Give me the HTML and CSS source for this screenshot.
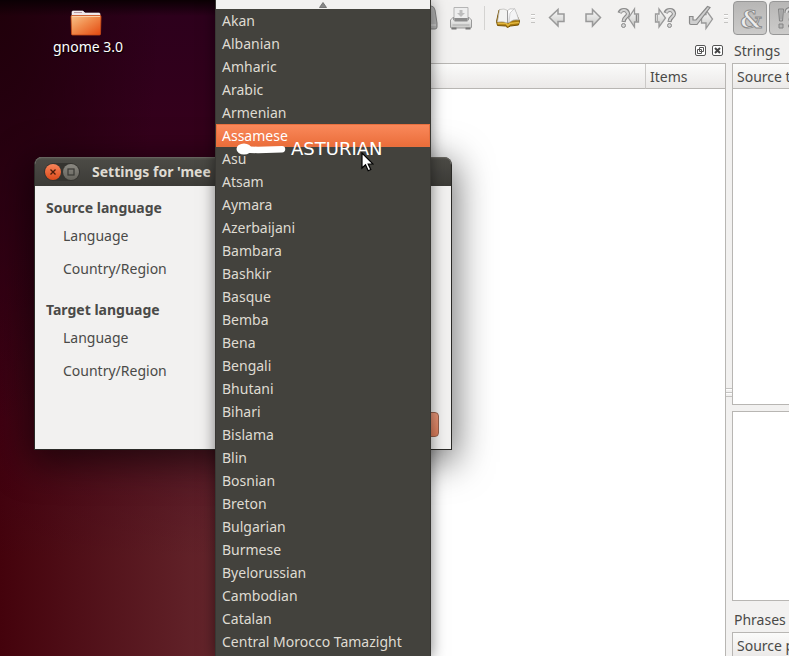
FILE: index.html
```html
<!DOCTYPE html>
<html lang="en">
<head>
<meta charset="utf-8">
<title>Settings</title>
<link rel="stylesheet" href="styles.css">
</head>
<body>
<svg class="defs" aria-hidden="true">
  <defs>
    <linearGradient id="metal" x1="0" y1="0" x2="0" y2="1"><stop offset="0" stop-color="#fafafa"/><stop offset="1" stop-color="#c9c9c7"/></linearGradient>
    <linearGradient id="folder" x1="0" y1="0" x2="1" y2="1"><stop offset="0" stop-color="#f9c48c"/><stop offset=".45" stop-color="#f08b4c"/><stop offset="1" stop-color="#e4480f"/></linearGradient>
  </defs>
</svg>
<main class="desktop">
  <a class="shortcut" href="#folder">
    <svg width="32" height="26" viewBox="0 0 32 26" aria-hidden="true">
      <path d="M2 7V2q0-1 1-1h10l2 2h14q1 0 1 1v4z" fill="#efe6e8" stroke="#fff" stroke-width=".6"/>
      <path d="M4 2.500h8" stroke="#b99ba4" stroke-width="1"/>
      <path d="M1 6.500q0-1 1-1h28q1 0 1 1l-.5 17.500q0 1-1 1h-27q-1 0-1-1z" fill="url(#folder)" stroke="#c84a16" stroke-width=".8"/>
      <path d="M2 6.500h28" stroke="#fbd0a8" stroke-width="1"/>
    </svg>
    <span>gnome 3.0</span>
  </a>

  <section class="app" aria-label="Translation editor">
    <div class="toolbar" role="toolbar" aria-label="Main">
      <button class="tool" aria-label="Save"><svg width="26" height="26" viewBox="0 0 26 26"><path d="M3 18L7 1h12q3 0 4 4l2 13v4q0 2-2 2H5q-2 0-2-2z" fill="#b4b4b4" stroke="#858585"/><path d="M4 20h20" stroke="#ddd"/></svg></button>
      <button class="tool" aria-label="Print"><svg width="26" height="26" viewBox="0 0 26 26"><path d="M6 2.500h14v11H6z" fill="#eee" stroke="#b5b5b5"/><path d="M11.500 5h3v3H17l-4 4-4-4h2.500z" fill="#bdbdbd"/><path d="M5.500 12l-3 3v7q0 1 1 1h19q1 0 1-1v-7l-3-3v3h-15z" fill="url(#metal)" stroke="#999"/><path d="M6.500 13h13v3.500h-13z" fill="#8b8b8b"/><path d="M4.500 20h17" stroke="#aaa"/><path d="M3.500 23.500h5M17.500 23.500h5" stroke="#777" stroke-width="2"/></svg></button>
      <span class="separator"></span>
      <button class="tool" aria-label="Phrase book"><svg width="26" height="26" viewBox="0 0 26 26"><path d="M4 5L1.500 16.500l1 4 8 .5 2 1.500 3-1.500 8-1 1-4-5-10z" fill="#a8790c" stroke="#765204"/><path d="M2.500 18.500h8.500l2 2 2-2 9-1" fill="none" stroke="#e3b83e" stroke-width="1.500"/><path d="M4.500 4.500q5-1.500 8 1v12.500q-4-2-10-1z" fill="#f3f3f1" stroke="#bbb" stroke-width=".7"/><path d="M12.500 5.500Q14 3 19.500 4L24 15q-7-1-11 3z" fill="#fff" stroke="#aaa" stroke-width=".7"/><path d="M12.500 6v12" stroke="#999"/><path d="M15 8l4.500-4.500q2.500 5 4 11-5-1-9.500 3z" fill="#f4f4f5" stroke="#aaa" stroke-width=".5"/></svg></button>
      <span class="handle"></span>
      <button class="tool" aria-label="Previous"><svg width="26" height="26" viewBox="0 0 26 26"><path d="M5.500 12.500L14 4.500V9h6v7.500h-6V21z" fill="url(#metal)" stroke="#999" stroke-width="1.500"/></svg></button>
      <button class="tool" aria-label="Next"><svg width="26" height="26" viewBox="0 0 26 26"><path d="M20.500 12.500L12.500 4.500V9H6v7.500h6.500V21z" fill="url(#metal)" stroke="#999" stroke-width="1.500"/></svg></button>
      <button class="tool" aria-label="Previous unfinished"><svg width="26" height="26" viewBox="0 0 26 26"><path d="M12.500 13l6-9v5h4v8h-4v5z" fill="url(#metal)" stroke="#999" stroke-width="1.300"/><path d="M20.500 9.500v7" stroke="#888" stroke-width="1.500"/><path d="M3.500 8q1-3 4.500-3t4 3.500q0 2-2 3.500t-2.500 5" fill="none" stroke="#8a8a8a" stroke-width="4.200"/><path d="M4.200 7.500Q5.500 5 8 5t4 3.500q0 2-2 3.500t-2.500 4" fill="none" stroke="#d4d4d4" stroke-width="2"/><circle cx="7.500" cy="20.500" r="2" fill="#d4d4d4" stroke="#8a8a8a"/></svg></button>
      <button class="tool" aria-label="Next unfinished"><svg width="26" height="26" viewBox="0 0 26 26"><path d="M3.500 9H7V4l6.500 9L7 22v-5H3.500z" fill="url(#metal)" stroke="#999" stroke-width="1.300"/><path d="M5.500 9.500v7" stroke="#aaa"/><path d="M13.500 8q1-3 4.500-3t4 3.500q0 2-2 3.500t-2.500 5" fill="none" stroke="#8a8a8a" stroke-width="4.200"/><path d="M14.200 7.500Q15.500 5 18 5t4 3.500q0 2-2 3.500t-2.500 4" fill="none" stroke="#d4d4d4" stroke-width="2"/><circle cx="17.500" cy="20.500" r="2" fill="#d4d4d4" stroke="#8a8a8a"/></svg></button>
      <button class="tool" aria-label="Done and next"><svg width="26" height="26" viewBox="0 0 26 26"><path d="M13.500 9.500H18V5l6.500 9L18 23.500V18h-4.500z" fill="url(#metal)" stroke="#999" stroke-width="1.300"/><path d="M1.500 11.500H5v3.500h3L19.500 1.500l2.500 1L9 19.500H3q-1.500 0-1.500-1.500z" fill="#cfcfcf" stroke="#8a8a8a" stroke-width="1.200"/></svg></button>
      <span class="handle"></span>
      <button class="toggle" aria-pressed="true" aria-label="Accelerators"><svg width="30" height="30" viewBox="0 0 30 30"><text class="glyph" x="16" y="25" text-anchor="middle">&amp;</text></svg></button>
      <button class="toggle" aria-pressed="true" aria-label="Ending punctuation"><svg width="30" height="30" viewBox="0 0 30 30"><path d="M7.500 6h5l-1 12h-3zM8 21h4v4H8z" fill="#b5b5b5" stroke="#828282"/><path d="M10 7v9" stroke="#999"/><path d="M15.500 10q0-4 4-4t4 3.500q0 2-2 3.500t-2 4.500" fill="none" stroke="#828282" stroke-width="4"/><path d="M15.500 10q0-4 4-4t4 3.500q0 2-2 3.500t-2 3.500" fill="none" stroke="#ddd" stroke-width="2"/><circle cx="19.500" cy="23" r="2" fill="#ddd" stroke="#828282"/></svg></button>
    </div>
    <div class="docks">
      <section class="dock context">
        <header class="dock-head buttons">
          <button class="mini" aria-label="Float"><svg width="11" height="11" viewBox="0 0 11 11"><rect x=".5" y=".5" width="10" height="10" rx="1.500" fill="#fff" stroke="#555"/><path d="M4.500 2.500h4v4h-4zM2.500 4.500h4v4h-4z" fill="#fff" stroke="#555"/></svg></button>
          <button class="mini" aria-label="Close"><svg width="11" height="11" viewBox="0 0 11 11"><rect x=".5" y=".5" width="10" height="10" rx="1.500" fill="#fff" stroke="#555"/><path d="M3 3l5 5M8 3L3 8" stroke="#444" stroke-width="2"/></svg></button>
        </header>
        <div class="view">
          <table><thead><tr><th aria-label="Context"></th><th class="items">Items</th></tr></thead></table>
        </div>
      </section>
      <div class="splitter"><span></span></div>
      <section class="dock strings">
        <header class="dock-head">Strings</header>
        <div class="view source"><table><thead><tr><th>Source text</th></tr></thead></table></div>
        <div class="view editor"></div>
        <header class="dock-head phrases">Phrases</header>
        <div class="view guesses"><table><thead><tr><th>Source phrase</th></tr></thead></table></div>
      </section>
    </div>
  </section>

  <section class="dialog" role="dialog" aria-labelledby="title">
    <header class="titlebar">
      <div class="controls">
        <button class="round close" aria-label="Close"><svg width="16" height="16" viewBox="0 0 16 16"><path d="M5.500 5.500l5 5M10.500 5.500l-5 5" stroke="#4a1c0a" stroke-width="1.300"/></svg></button>
        <button class="round max" aria-label="Maximize"><svg width="16" height="16" viewBox="0 0 16 16"><rect x="5" y="5" width="6" height="6" fill="none" stroke="#3a3935" stroke-width="1.200"/></svg></button>
      </div>
      <h1 id="title">Settings for 'mee</h1>
    </header>
    <form class="form">
      <fieldset>
        <legend>Source language</legend>
        <div class="field"><label for="sl">Language</label><select id="sl"></select></div>
        <div class="field"><label for="sc">Country/Region</label><select id="sc"></select></div>
      </fieldset>
      <fieldset>
        <legend>Target language</legend>
        <div class="field"><label for="tl">Language</label><select id="tl"></select></div>
        <div class="field"><label for="tc">Country/Region</label><select id="tc"></select></div>
      </fieldset>
      <button type="button" class="ok" aria-label="OK"></button>
    </form>
  </section>

  <div class="menu" role="listbox" aria-label="Language">
    <button class="scroll" aria-label="Scroll up"><svg width="8" height="6" viewBox="0 0 8 6"><path d="M4 .5L7.500 5.500h-7z" fill="#888" stroke="#666" stroke-width=".8"/></svg></button>
    <button role="option">Akan</button>
    <button role="option">Albanian</button>
    <button role="option">Amharic</button>
    <button role="option">Arabic</button>
    <button role="option">Armenian</button>
    <button role="option" aria-selected="true">Assamese</button>
    <button role="option">Asu</button>
    <button role="option">Atsam</button>
    <button role="option">Aymara</button>
    <button role="option">Azerbaijani</button>
    <button role="option">Bambara</button>
    <button role="option">Bashkir</button>
    <button role="option">Basque</button>
    <button role="option">Bemba</button>
    <button role="option">Bena</button>
    <button role="option">Bengali</button>
    <button role="option">Bhutani</button>
    <button role="option">Bihari</button>
    <button role="option">Bislama</button>
    <button role="option">Blin</button>
    <button role="option">Bosnian</button>
    <button role="option">Breton</button>
    <button role="option">Bulgarian</button>
    <button role="option">Burmese</button>
    <button role="option">Byelorussian</button>
    <button role="option">Cambodian</button>
    <button role="option">Catalan</button>
    <button role="option">Central Morocco Tamazight</button>
  </div>

  <div class="note">
    <svg width="50" height="12" viewBox="0 0 50 12" aria-hidden="true"><ellipse cx="8" cy="6" rx="7.500" ry="5.500" fill="#fff"/><path d="M8 6.500l14 .5 24-.8" fill="none" stroke="#fff" stroke-width="6.500" stroke-linecap="round"/></svg>
    <span>ASTURIAN</span>
  </div>
  <svg class="pointer" width="13" height="20" viewBox="0 0 13 20" aria-hidden="true"><path d="M1 1v15l3.500-3.300 2.700 6 2.600-1.200-2.600-5.500H12z" fill="#fff" stroke="#000" stroke-width="1.200"/></svg>
</main>
</body>
</html>
```
FILE: styles.css
```css
* { box-sizing: border-box; }
body {
  margin: 0;
  font: 14px/20px "Noto Sans", "Open Sans", sans-serif;
  color: #4a4a48;
}
button { font: inherit; padding: 0; border: 0; background: none; color: inherit; }
svg { display: block; }
.defs { position: absolute; width: 0; height: 0; }

.desktop {
  position: relative;
  height: 100vh;
  overflow: hidden;
  background:
    linear-gradient(#0b0004, transparent 16px),
    radial-gradient(160px 420px at 0 0, #20000a, transparent),
    linear-gradient(to bottom, #2c001c 0, #36001b 25%, transparent 85%),
    linear-gradient(to right, #44020c 0, #68292f 240px);
}
.shortcut {
  position: absolute;
  top: 10px;
  left: 38px;
  width: 100px;
  display: flex;
  flex-direction: column;
  align-items: center;
  gap: 1px;
  color: #fff;
  text-decoration: none;
  text-shadow: 1px 1px 1px #000;
}
.shortcut svg { margin-right: 4px; }

.app {
  position: absolute;
  top: 0;
  bottom: 0;
  left: 407px;
  right: 0;
  display: flex;
  flex-direction: column;
  background: #f2f1f0;
  overflow: hidden;
}
.toolbar { display: flex; align-items: center; height: 36px; flex: none; }
.tool { width: 36px; height: 34px; flex: none; display: grid; place-items: center; }
.separator { flex: none; width: 11px; height: 24px; background: linear-gradient(#d4d3d1, #d4d3d1) center / 1px 100% no-repeat; }
.handle {
  flex: none;
  width: 13px;
  height: 9px;
  background: repeating-linear-gradient(#c4c3c1 0 1px, #fff 1px 2px, transparent 2px 4px) center / 4px 100% no-repeat;
}
.toggle {
  flex: none;
  width: 34px;
  height: 34px;
  margin: 0 1px;
  display: grid;
  place-items: center;
  border: 1px solid #979797;
  border-radius: 4px;
  background: linear-gradient(#b7b6b5, #cccbca);
}
.glyph {
  font: bold 24px "DejaVu Serif", serif;
  fill: #ececec;
  stroke: #8c8c8c;
  stroke-width: 1px;
}

.docks { flex: 1; display: flex; min-height: 0; }
.dock { display: flex; flex-direction: column; min-width: 0; }
.context { flex: 0 0 319px; }
.strings { flex: 1; white-space: nowrap; overflow: hidden; }
.dock-head { flex: none; height: 27px; padding: 5px 0 0 2px; }
.buttons { display: flex; align-items: center; justify-content: flex-end; gap: 6px; padding: 2px 3px 0 0; }
.view { background: #fff; border: 1px solid #b8b6b3; overflow: hidden; }
.context .view { flex: 1; border-bottom: 0; }
.strings .view { border-right: 0; }
.source { height: 342px; flex: none; }
.editor { height: 190px; flex: none; margin-top: 6px; }
.phrases { height: 31px; padding-top: 9px; }
.guesses { flex: 1; border-bottom: 0; }
table { width: 100%; border-spacing: 0; table-layout: fixed; }
th {
  height: 25px;
  padding: 1px 4px 0;
  font-weight: normal;
  text-align: left;
  overflow: hidden;
  background: linear-gradient(#fbfbfa, #ebe9e8);
  border-bottom: 1px solid #b8b6b3;
}
.items { width: 80px; border-left: 1px solid #cbc9c7; }
.splitter { flex: 0 0 6px; display: grid; place-items: center; padding-top: 93px; }
.splitter span { width: 6px; height: 9px; background: repeating-linear-gradient(#c4c3c1 0 1px, #fff 1px 2px, transparent 2px 4px); }

.dialog {
  position: absolute;
  left: 34px;
  top: 157px;
  width: 418px;
  border: 1px solid #2b2a27;
  border-top: 0;
  border-radius: 8px 8px 0 0;
  background: #f2f1f0;
  box-shadow: 0 8px 36px 4px rgba(0, 0, 0, .55);
}
.titlebar {
  display: flex;
  align-items: center;
  gap: 12px;
  height: 29px;
  padding: 0 9px;
  border-radius: 7px 7px 0 0;
  background: linear-gradient(#5c5a54, #4b4a45 3px, #3c3b37);
  box-shadow: inset 0 1px #66645e;
}
.titlebar h1 { margin: 0; font-size: 14px; font-weight: bold; color: #dfdbd2; white-space: nowrap; }
.controls { display: flex; gap: 2px; padding: 1px; border-radius: 10px; background: #353430; }
.round { width: 16px; height: 16px; border-radius: 50%; }
.close { background: linear-gradient(#f7845a, #dc4b1b); }
.max { background: linear-gradient(#8b8982, #65635c); }
.form { display: flex; flex-direction: column; padding: 12px 12px; }
fieldset { border: 0; margin: 0 0 8px; padding: 0; min-width: 0; }
legend { padding: 0; margin: 0 0 1px -1px; font-weight: bold; height: 20px; }
.field { display: flex; align-items: center; height: 33px; padding-left: 16px; }
.field label { width: 160px; }
.field select { width: 190px; height: 26px; }
.field + .field { margin-bottom: 7px; }
.ok {
  align-self: flex-end;
  width: 85px;
  height: 25px;
  margin-top: 10px;
  border: 1px solid #98614d;
  border-radius: 4px;
  background: linear-gradient(#e9977a, #dd7d5b);
}

.menu {
  position: absolute;
  left: 215px;
  top: 0;
  bottom: 0;
  width: 216px;
  display: flex;
  flex-direction: column;
  border: solid #383733;
  border-width: 0 1px;
  background: #43423d;
  color: #dfdbd2;
  box-shadow: 0 2px 14px rgba(0, 0, 0, .5);
}
.menu .scroll { height: 9px; flex: none; display: grid; place-items: center; background: #f2f1f0; }
.menu [role="option"] { height: 23px; flex: none; padding: 0 6px; text-align: left; white-space: nowrap; }
.menu [aria-selected="true"] {
  color: #fff;
  background: linear-gradient(#fa8a5c, #ea6c39);
  box-shadow: inset 0 0 0 1px #e8703f;
}

.note {
  position: absolute;
  left: 236px;
  top: 139px;
  display: flex;
  align-items: center;
  gap: 5px;
  color: #fff;
  font: 18px/20px "DejaVu Sans", sans-serif;
}
.pointer { position: absolute; left: 361px; top: 152px; }
```
